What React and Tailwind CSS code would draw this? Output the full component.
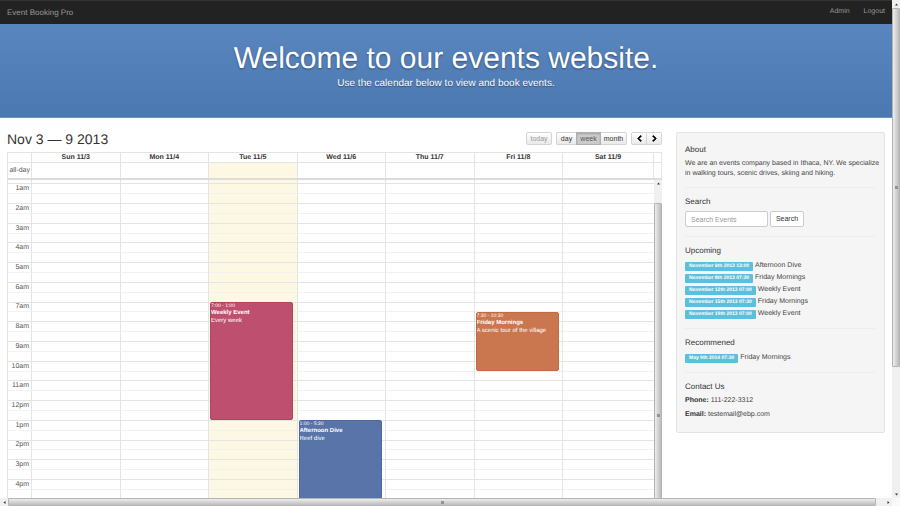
import { FaChevronLeft, FaChevronRight } from "react-icons/fa";

const DAYS = ["Sun 11/3", "Mon 11/4", "Tue 11/5", "Wed 11/6", "Thu 11/7", "Fri 11/8", "Sat 11/9"];
const TODAY = 2;
const FIRST_HOUR = 1;
const LAST_HOUR = 17;

const EVENTS = [
  { day: 2, start: 7, end: 13, time: "7:00 - 1:00", title: "Weekly Event", note: "Every week", color: "bg-[#bf4f6e] border-[#b04562]" },
  { day: 3, start: 13, end: 17.5, time: "1:00 - 5:30", title: "Afternoon Dive", note: "Reef dive", color: "bg-[#5974a8] border-[#4d689d]" },
  { day: 5, start: 7.5, end: 10.5, time: "7:30 - 10:30", title: "Friday Mornings", note: "A scenic tour of the village", color: "bg-[#ca764f] border-[#bf6b44]" },
];

const UPCOMING = [
  ["November 6th 2013 13:00", "Afternoon Dive"],
  ["November 8th 2013 07:30", "Friday Mornings"],
  ["November 12th 2013 07:00", "Weekly Event"],
  ["November 15th 2013 07:30", "Friday Mornings"],
  ["November 19th 2013 07:00", "Weekly Event"],
];

const RECOMMENDED = [["May 9th 2014 07:30", "Friday Mornings"]];

function hourLabel(hour) {
  const h = hour % 12 === 0 ? 12 : hour % 12;
  return `${h}${hour < 12 ? "am" : "pm"}`;
}

function Columns() {
  return (
    <colgroup>
      <col className="w-6" />
      {DAYS.map((d, i) => (
        <col key={d} className={i === 6 ? "w-[91px]" : undefined} />
      ))}
      <col className="w-2" />
    </colgroup>
  );
}

function Toolbar() {
  const base = "h-[13px] border border-[#d4d4d4] bg-linear-to-b from-white to-[#e9e9e9] text-[7px] leading-[11px] text-[#333]";
  return (
    <div className="flex gap-1">
      <button disabled className={`${base} w-[26px] rounded-[2px] text-[#999]!`}>today</button>
      <div className="flex">
        <button className={`${base} w-5 rounded-l-[2px] border-r-0`}>day</button>
        <button aria-pressed="true" className="h-[13px] w-[25px] border border-[#b0b0b0] bg-[#cbcbcb] text-[7px] leading-[11px] text-[#555] shadow-[inset_0_1px_2px_rgba(0,0,0,0.2)]">week</button>
        <button className={`${base} w-[26px] rounded-r-[2px] border-l-0`}>month</button>
      </div>
      <div className="flex">
        <button aria-label="Previous week" className={`${base} flex w-4 items-center justify-center rounded-l-[2px] text-black!`}>
          <FaChevronLeft size={7} stroke="currentColor" strokeWidth={50} />
        </button>
        <button aria-label="Next week" className={`${base} flex w-[15px] items-center justify-center rounded-r-[2px] border-l-0 text-black!`}>
          <FaChevronRight size={7} stroke="currentColor" strokeWidth={50} />
        </button>
      </div>
    </div>
  );
}

function CalendarHead() {
  const line = "border-r border-[#e4e4e4]";
  return (
    <table className="w-full table-fixed border-separate border-spacing-0 border-t border-l border-[#e4e4e4]">
      <Columns />
      <thead>
        <tr className="h-[10px]">
          <th className={`${line} border-b p-0`} />
          {DAYS.map((d) => (
            <th key={d} scope="col" className={`${line} border-b p-0 text-center text-[7px] leading-[8px] font-bold text-[#333]`}>{d}</th>
          ))}
          <th className={`${line} border-b p-0`} />
        </tr>
      </thead>
      <tbody>
        <tr className="h-[15px]">
          <th scope="row" className={`${line} p-0 pr-px text-right text-[7px] leading-[8px] font-normal whitespace-nowrap text-[#555]`}>all-day</th>
          {DAYS.map((d, i) => (
            <td key={d} className={`${line} p-0 ${i === TODAY ? "bg-[#fcf8e3]" : ""}`} />
          ))}
          <td className={`${line} p-0`} />
        </tr>
      </tbody>
    </table>
  );
}

function CalendarSlots() {
  const rows = [];
  for (let h = FIRST_HOUR; h < LAST_HOUR; h++) rows.push([h, true], [h, false]);
  return (
    <div className="relative overflow-hidden border-l border-[#e4e4e4]">
      <table className="h-[319px] w-full table-fixed border-separate border-spacing-0">
        <Columns />
        <tbody>
          <tr className="h-[3px]">
            <td className="border-r border-[#e4e4e4] p-0" />
            {DAYS.map((d, i) => (
              <td key={d} className={`p-0 ${i === 6 ? "" : "border-r border-[#e4e4e4]"} ${i === TODAY ? "bg-[#fcf8e3]" : ""}`} />
            ))}
            <td className="p-0" />
          </tr>
          {rows.map(([h, full]) => (
            <tr key={`${h}-${full}`} className="h-[9px]">
              <th scope="row" className={`border-t border-r border-r-[#e4e4e4] p-0 pr-[2px] text-right align-bottom text-[7px] leading-[8px] font-normal text-[#555] ${full ? "border-t-[#e4e4e4]" : "border-t-[#f3f3f3]"}`}>
                {full ? hourLabel(h) : null}
              </th>
              {DAYS.map((d, i) => (
                <td
                  key={d}
                  className={`border-t p-0 ${full ? "border-t-[#e4e4e4]" : "border-t-[#f1f1f0]"} ${i === 6 ? "" : "border-r border-r-[#e4e4e4]"} ${i === TODAY ? "bg-[#fcf8e3]" : ""}`}
                />
              ))}
              <td className="p-0" />
            </tr>
          ))}
        </tbody>
      </table>
      <div className="absolute inset-x-0 top-1 bottom-0 grid grid-cols-[repeat(6,minmax(0,1fr))_91px] pr-2 pl-6">
        {DAYS.map((d, i) => (
          <div key={d} className="relative">
            {EVENTS.filter((e) => e.day === i).map((e) => {
              const span = LAST_HOUR - FIRST_HOUR;
              return (
                <article
                  key={e.title}
                  className={`absolute left-px w-[94%] overflow-hidden rounded-[2px] border text-white ${e.color}`}
                  style={{
                    top: `${((e.start - FIRST_HOUR) / span) * 100}%`,
                    height: `${((e.end - e.start) / span) * 100}%`,
                  }}
                >
                  <p className="text-[5px] leading-[6px]">{e.time}</p>
                  <h3 className="text-[6px] leading-[9px] font-bold">{e.title}</h3>
                  <p className="text-[6px] leading-[7px] whitespace-nowrap">{e.note}</p>
                </article>
              );
            })}
          </div>
        ))}
      </div>
      <div aria-hidden="true" className="absolute inset-y-0 right-0 flex w-2 flex-col bg-[#f0f0f0]">
        <div className="flex h-[7px] shrink-0 items-center justify-center">
          <Arrow dir="up" />
        </div>
        <div className="mt-4 flex h-[424px] shrink-0 items-center justify-center rounded-t-[1px] border border-[#b4b4b6] bg-linear-to-r from-[#ededed] to-[#bcbcbe]">
          <Grip />
        </div>
      </div>
    </div>
  );
}

function Arrow({ dir }) {
  const points = { up: "2.5,1.5 4,3.5 1,3.5", down: "1,1.5 4,1.5 2.5,3.5", left: "1.5,2.5 3.5,1 3.5,4", right: "1.5,1 3.5,2.5 1.5,4" };
  return (
    <svg viewBox="0 0 5 5" className="size-[5px]">
      <polygon points={points[dir]} fill="#333" />
    </svg>
  );
}

function Grip() {
  return <span className="size-[3px] bg-[#939395]" />;
}

function SideSection({ title, last, children }) {
  return (
    <section className={`pt-[9px] pb-2 ${last ? "" : "border-b border-[#eeeeee]"}`}>
      <h2 className="mb-1 text-[8px] leading-[10px] text-[#333]">{title}</h2>
      {children}
    </section>
  );
}

function EventList({ items }) {
  return (
    <ul className="text-[7px] leading-[12px]">
      {items.map(([date, name]) => (
        <li key={date} className="flex h-3 items-center gap-[2px]">
          <span className="rounded-[1px] bg-[#5bc0de] px-1 text-[5px] leading-[9px] font-bold text-white">{date}</span>
          {name}
        </li>
      ))}
    </ul>
  );
}

function Sidebar() {
  return (
    <aside className="rounded-[2px] border border-[#e3e3e3] bg-[#f5f5f5] px-2 pt-[3px] pb-1 text-[7px] leading-[10px] text-[#444]">
      <SideSection title="About">
        <p className="-mr-1">We are an events company based in Ithaca, NY. We specialize in walking tours, scenic drives, skiing and hiking.</p>
      </SideSection>
      <SideSection title="Search">
        <form className="flex gap-[2px] pb-px" onSubmit={(e) => e.preventDefault()}>
          <input
            type="text"
            aria-label="Search Events"
            placeholder="Search Events"
            className="h-4 w-[83px] rounded-[2px] border border-[#ccc] bg-white px-[5px] text-[7px] placeholder:text-[#999]"
          />
          <button className="h-4 w-[34px] rounded-[2px] border border-[#ccc] bg-white text-[7px] text-[#333]">Search</button>
        </form>
      </SideSection>
      <SideSection title="Upcoming">
        <EventList items={UPCOMING} />
      </SideSection>
      <SideSection title="Recommened">
        <EventList items={RECOMMENDED} />
      </SideSection>
      <SideSection title="Contact Us" last>
        <p className="mb-1"><strong className="text-[#333]">Phone:</strong> 111-222-3312</p>
        <p><strong className="text-[#333]">Email:</strong> testemail@ebp.com</p>
      </SideSection>
    </aside>
  );
}

export default function App() {
  return (
    <div className="flex h-screen flex-col overflow-hidden bg-white font-['Liberation_Sans',Arial,sans-serif] [text-rendering:geometricPrecision]">
      <div className="flex min-h-0 flex-1">
        <div className="min-w-0 flex-1 overflow-hidden">
          <nav className="flex h-6 items-center justify-between border-t border-[#333] bg-[#222] px-[7px] text-[7px] text-[#999]">
            <a href="#home" className="text-[8px]">Event Booking Pro</a>
            <div className="flex gap-3.5">
              <a href="#admin">Admin</a>
              <a href="#logout">Logout</a>
            </div>
          </nav>
          <header className="flex h-[94px] flex-col items-center border-b border-[#6f93c2] bg-linear-to-b from-[#5a86bf] to-[#4c78b1] pt-[17px] text-white">
            <h1 className="text-[30px] leading-[36px] [text-shadow:0_1px_2px_rgba(0,0,0,0.4)]">Welcome to our events website.</h1>
            <p className="text-[10px] leading-[14px] [text-shadow:0_1px_1px_rgba(0,0,0,0.4)]">Use the calendar below to view and book events.</p>
          </header>
          <div className="flex items-start pt-3.5">
            <main className="w-3/4 px-[7px]">
              <div className="flex h-5 items-start justify-between">
                <h2 className="text-[14px] leading-[15px] text-[#333]">Nov 3 — 9 2013</h2>
                <Toolbar />
              </div>
              <CalendarHead />
              <div className="h-[2px] bg-[#dcdcde]" />
              <CalendarSlots />
            </main>
            <div className="w-1/4 px-[7px]">
              <Sidebar />
            </div>
          </div>
        </div>
        <div aria-hidden="true" className="flex w-2 shrink-0 flex-col bg-[#f0f0f0]">
          <div className="flex h-2 items-center justify-center">
            <Arrow dir="up" />
          </div>
          <div className="flex h-[72%] items-center justify-center rounded-[1px] border border-[#b4b4b6] bg-linear-to-r from-[#ededed] to-[#bcbcbe]">
            <Grip />
          </div>
          <div className="mt-auto flex h-2 items-center justify-center">
            <Arrow dir="down" />
          </div>
        </div>
      </div>
      <div aria-hidden="true" className="flex h-2 shrink-0 bg-[#f0f0f0]">
        <div className="flex w-2 items-center justify-center">
          <Arrow dir="left" />
        </div>
        <div className="mr-2 flex flex-1 items-center justify-center rounded-[1px] border border-[#b4b4b6] bg-linear-to-b from-[#ededed] to-[#bcbcbe]">
          <Grip />
        </div>
        <div className="flex w-2 items-center justify-center">
          <Arrow dir="right" />
        </div>
        <div className="w-2 bg-[#fafafa]" />
      </div>
    </div>
  );
}
